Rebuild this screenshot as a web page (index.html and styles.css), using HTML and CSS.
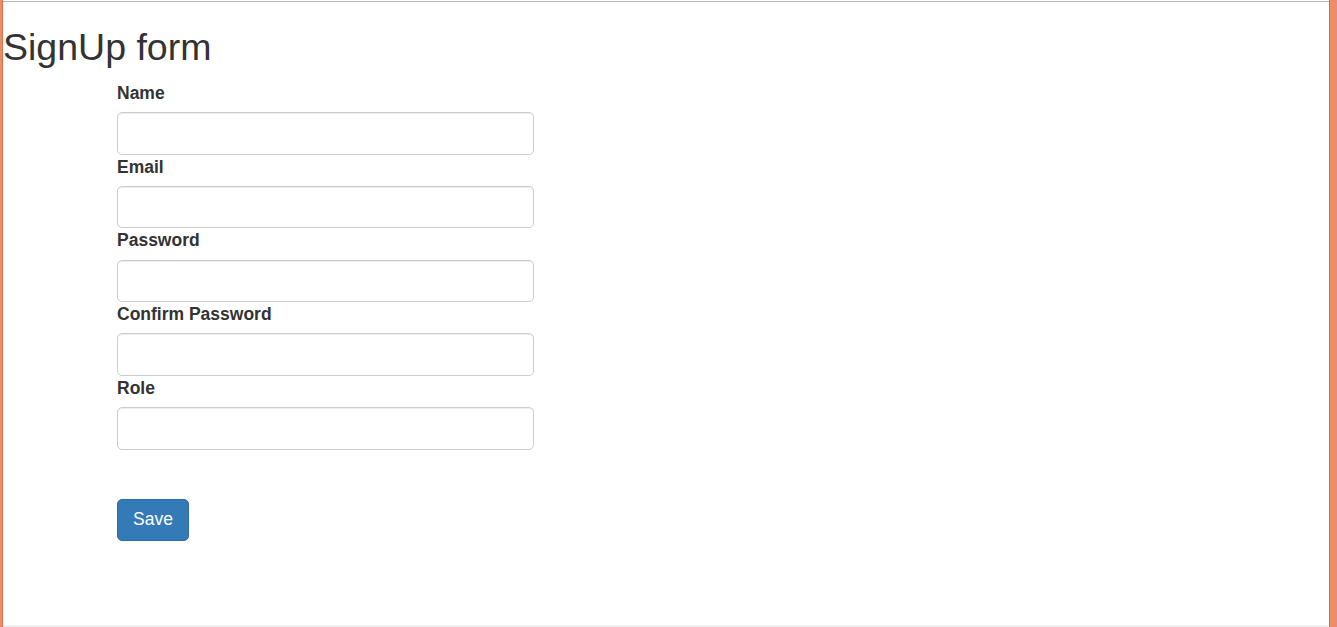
FILE: index.html
```html
<!DOCTYPE html>
<html lang="en">
<head>
<meta charset="utf-8">
<title>SignUp form</title>
<link rel="stylesheet" href="styles.css">
</head>
<body>
<div class="window">
  <div class="edge-left"></div>
  <main class="page">
    <h2 class="title">SignUp form</h2>
    <form class="signup">
      <label class="label" for="name">Name</label>
      <input class="field" id="name" type="text">
      <label class="label" for="email">Email</label>
      <input class="field" id="email" type="email">
      <label class="label" for="pw">Password</label>
      <input class="field" id="pw" type="password">
      <label class="label" for="pw2">Confirm Password</label>
      <input class="field" id="pw2" type="password">
      <label class="label" for="role">Role</label>
      <input class="field" id="role" type="text">
      <div class="actions">
        <button class="btn" type="button">Save</button>
      </div>
    </form>
  </main>
  <div class="edge-right"></div>
</div>
</body>
</html>
```

FILE: styles.css
```css
* { box-sizing: border-box; }
html, body { margin: 0; padding: 0; background: #fff; }
body {
  font-family: "Liberation Sans", Arial, Helvetica, sans-serif;
  color: #333;
  overflow: hidden;
}
.window {
  display: flex;
  height: 627px;
}
.edge-left {
  width: 3px;
  flex: none;
  background: linear-gradient(to right, #ee8c66 0, #ee8c66 2px, #d2724f 2px, #d2724f 3px);
}
.edge-right {
  width: 8px;
  flex: none;
  background: linear-gradient(to right, #c96e4e 0, #c96e4e 1px, #ee8e69 1px);
}
.page {
  flex: 1;
  min-width: 0;
  margin-top: 1px;
  border-top: 1px solid #b8b8b8;
  border-bottom: 2px solid #efefef;
}
.title {
  margin: 25px 0 12.5px;
  font-size: 37.5px;
  line-height: 1.1;
  font-weight: 500;
  color: #333;
}
.signup {
  margin-left: 114px;
  width: 417px;
  display: flex;
  flex-direction: column;
}
.label {
  display: block;
  font-size: 17.5px;
  line-height: 25px;
  font-weight: 700;
  margin-bottom: 6.25px;
}
.field {
  display: block;
  width: 100%;
  height: 42.5px;
  padding: 7.5px 15px;
  font: inherit;
  font-size: 17.5px;
  border: 1px solid #ccc;
  border-radius: 5px;
  box-shadow: inset 0 1px 1px rgba(0,0,0,.075);
  background: #fff;
}
.actions {
  margin-top: 49px;
}
.btn {
  font-family: inherit;
  font-size: 17.5px;
  line-height: 25px;
  padding: 7.5px 15px;
  color: #fff;
  background: #337ab7;
  border: 1px solid #2e6da4;
  border-radius: 5px;
  cursor: pointer;
}
```
